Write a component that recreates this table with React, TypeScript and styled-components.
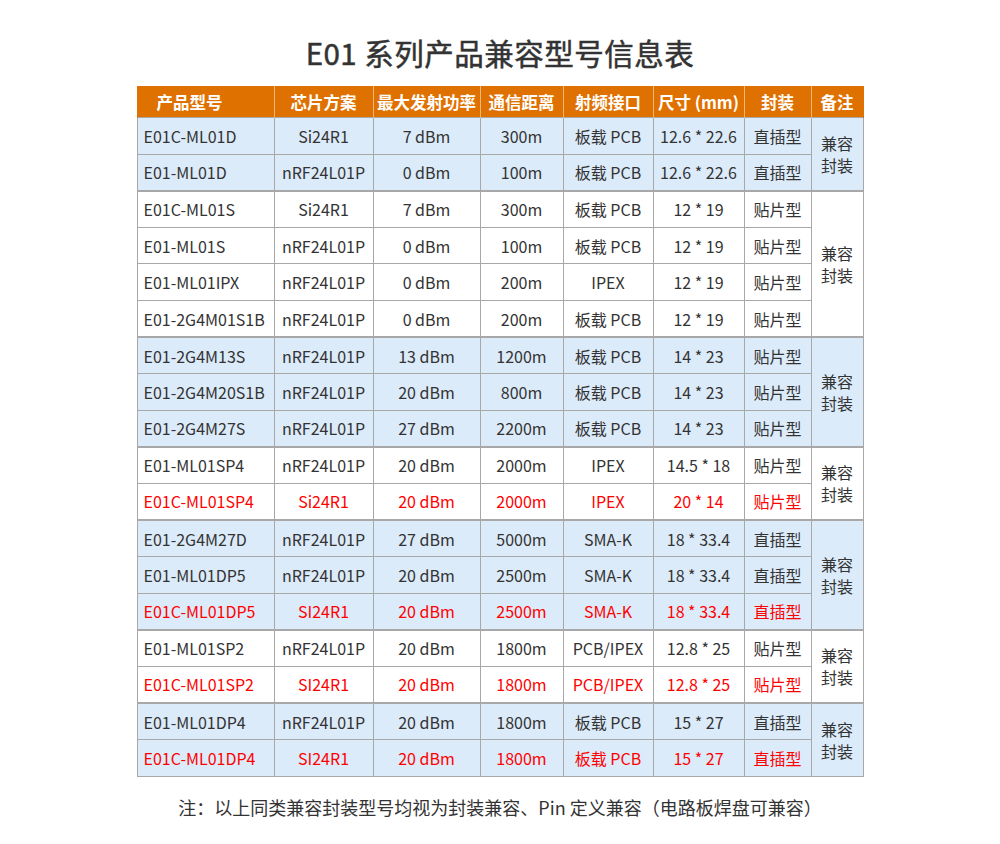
import React from 'react';
import styled, { createGlobalStyle } from 'styled-components';

type Row = {
  model: string;
  chip: string;
  power: string;
  range: string;
  rf: string;
  size: string;
  pkg: string;
  red?: boolean;
};

type Group = { shade: boolean; rows: Row[] };

const groups: Group[] = [
  {
    shade: true,
    rows: [
      { model: 'E01C-ML01D', chip: 'Si24R1', power: '7 dBm', range: '300m', rf: '板载 PCB', size: '12.6 * 22.6', pkg: '直插型' },
      { model: 'E01-ML01D', chip: 'nRF24L01P', power: '0 dBm', range: '100m', rf: '板载 PCB', size: '12.6 * 22.6', pkg: '直插型' },
    ],
  },
  {
    shade: false,
    rows: [
      { model: 'E01C-ML01S', chip: 'Si24R1', power: '7 dBm', range: '300m', rf: '板载 PCB', size: '12 * 19', pkg: '贴片型' },
      { model: 'E01-ML01S', chip: 'nRF24L01P', power: '0 dBm', range: '100m', rf: '板载 PCB', size: '12 * 19', pkg: '贴片型' },
      { model: 'E01-ML01IPX', chip: 'nRF24L01P', power: '0 dBm', range: '200m', rf: 'IPEX', size: '12 * 19', pkg: '贴片型' },
      { model: 'E01-2G4M01S1B', chip: 'nRF24L01P', power: '0 dBm', range: '200m', rf: '板载 PCB', size: '12 * 19', pkg: '贴片型' },
    ],
  },
  {
    shade: true,
    rows: [
      { model: 'E01-2G4M13S', chip: 'nRF24L01P', power: '13 dBm', range: '1200m', rf: '板载 PCB', size: '14 * 23', pkg: '贴片型' },
      { model: 'E01-2G4M20S1B', chip: 'nRF24L01P', power: '20 dBm', range: '800m', rf: '板载 PCB', size: '14 * 23', pkg: '贴片型' },
      { model: 'E01-2G4M27S', chip: 'nRF24L01P', power: '27 dBm', range: '2200m', rf: '板载 PCB', size: '14 * 23', pkg: '贴片型' },
    ],
  },
  {
    shade: false,
    rows: [
      { model: 'E01-ML01SP4', chip: 'nRF24L01P', power: '20 dBm', range: '2000m', rf: 'IPEX', size: '14.5 * 18', pkg: '贴片型' },
      { model: 'E01C-ML01SP4', chip: 'Si24R1', power: '20 dBm', range: '2000m', rf: 'IPEX', size: '20 * 14', pkg: '贴片型', red: true },
    ],
  },
  {
    shade: true,
    rows: [
      { model: 'E01-2G4M27D', chip: 'nRF24L01P', power: '27 dBm', range: '5000m', rf: 'SMA-K', size: '18 * 33.4', pkg: '直插型' },
      { model: 'E01-ML01DP5', chip: 'nRF24L01P', power: '20 dBm', range: '2500m', rf: 'SMA-K', size: '18 * 33.4', pkg: '直插型' },
      { model: 'E01C-ML01DP5', chip: 'SI24R1', power: '20 dBm', range: '2500m', rf: 'SMA-K', size: '18 * 33.4', pkg: '直插型', red: true },
    ],
  },
  {
    shade: false,
    rows: [
      { model: 'E01-ML01SP2', chip: 'nRF24L01P', power: '20 dBm', range: '1800m', rf: 'PCB/IPEX', size: '12.8 * 25', pkg: '贴片型' },
      { model: 'E01C-ML01SP2', chip: 'SI24R1', power: '20 dBm', range: '1800m', rf: 'PCB/IPEX', size: '12.8 * 25', pkg: '贴片型', red: true },
    ],
  },
  {
    shade: true,
    rows: [
      { model: 'E01-ML01DP4', chip: 'nRF24L01P', power: '20 dBm', range: '1800m', rf: '板载 PCB', size: '15 * 27', pkg: '直插型' },
      { model: 'E01C-ML01DP4', chip: 'SI24R1', power: '20 dBm', range: '1800m', rf: '板载 PCB', size: '15 * 27', pkg: '直插型', red: true },
    ],
  },
];

const columns = [
  { title: '产品型号', width: 137 },
  { title: '芯片方案', width: 99 },
  { title: '最大发射功率', width: 107 },
  { title: '通信距离', width: 83 },
  { title: '射频接口', width: 90 },
  { title: '尺寸 (mm)', width: 91 },
  { title: '封装', width: 67 },
  { title: '备注', width: 52 },
];

const GlobalStyle = createGlobalStyle`
  html, body {
    margin: 0;
    padding: 0;
    background: #ffffff;
  }
  body {
    font-family: "Noto Sans CJK SC", "Noto Sans", sans-serif;
    color: #333333;
  }
`;

const Page = styled.div`
  width: 1000px;
  height: 844px;
  display: flex;
  flex-direction: column;
  align-items: center;
  padding-top: 33px;
  box-sizing: border-box;
`;

const Title = styled.h1`
  margin: 0;
  font-size: 29.5px;
  font-weight: 400;
  -webkit-text-stroke: 0.5px #333333;
  line-height: 38px;
  color: #333333;
  letter-spacing: 0.5px;
`;

const Table = styled.table`
  margin-top: 15px;
  width: 726px;
  border-collapse: collapse;
  table-layout: fixed;
  font-size: 16px;
`;

const HeadCell = styled.th<{ $first?: boolean }>`
  height: 31px;
  padding: 0 0 0 ${({ $first }) => ($first ? '19px' : '0')};
  text-align: ${({ $first }) => ($first ? 'left' : 'center')};
  background: #df7100;
  color: #ffffff;
  font-weight: 700;
  font-size: 16.5px;
  white-space: nowrap;
  border-left: 1px solid #f2b77a;
  &:first-child {
    border-left: 1px solid #df7100;
  }
  &:last-child {
    border-right: 1px solid #df7100;
  }
`;

const BodyRow = styled.tr<{ $shade: boolean; $groupStart: boolean }>`
  height: 36.6px;
  background: ${({ $shade }) => ($shade ? '#dcebfa' : '#ffffff')};
  & > td {
    border-top: ${({ $groupStart }) => ($groupStart ? '2px solid #a8a8a8' : '1px solid #a8a8a8')};
  }
`;

const Cell = styled.td<{ $red?: boolean; $left?: boolean }>`
  padding: 0 ${({ $left }) => ($left ? '6px' : '0')};
  text-align: ${({ $left }) => ($left ? 'left' : 'center')};
  color: ${({ $red }) => ($red ? '#ff0000' : '#333333')};
  border: 1px solid #a8a8a8;
  white-space: nowrap;
  line-height: 20px;
`;

const NoteCell = styled.td`
  padding: 0;
  text-align: center;
  color: #333333;
  border: 1px solid #a8a8a8;
  border-top: 2px solid #a8a8a8;
  line-height: 22px;
`;

const Footnote = styled.p`
  margin: 18px 0 0;
  font-size: 18px;
  color: #333333;
  line-height: 24px;
`;

export default function App() {
  return (
    <>
      <GlobalStyle />
      <Page>
        <Title>E01 系列产品兼容型号信息表</Title>
        <Table>
          <colgroup>
            {columns.map((c) => (
              <col key={c.title} style={{ width: c.width }} />
            ))}
          </colgroup>
          <thead>
            <tr>
              {columns.map((c, i) => (
                <HeadCell key={c.title} $first={i === 0}>
                  {c.title}
                </HeadCell>
              ))}
            </tr>
          </thead>
          <tbody>
            {groups.map((g, gi) =>
              g.rows.map((r, ri) => (
                <BodyRow key={r.model} $shade={g.shade} $groupStart={ri === 0 && gi > 0}>
                  <Cell $left $red={r.red}>{r.model}</Cell>
                  <Cell $red={r.red}>{r.chip}</Cell>
                  <Cell $red={r.red}>{r.power}</Cell>
                  <Cell $red={r.red}>{r.range}</Cell>
                  <Cell $red={r.red}>{r.rf}</Cell>
                  <Cell $red={r.red}>{r.size}</Cell>
                  <Cell $red={r.red}>{r.pkg}</Cell>
                  {ri === 0 && (
                    <NoteCell rowSpan={g.rows.length}>
                      兼容
                      <br />
                      封装
                    </NoteCell>
                  )}
                </BodyRow>
              ))
            )}
          </tbody>
        </Table>
        <Footnote>注：以上同类兼容封装型号均视为封装兼容、Pin 定义兼容（电路板焊盘可兼容）</Footnote>
      </Page>
    </>
  );
}
